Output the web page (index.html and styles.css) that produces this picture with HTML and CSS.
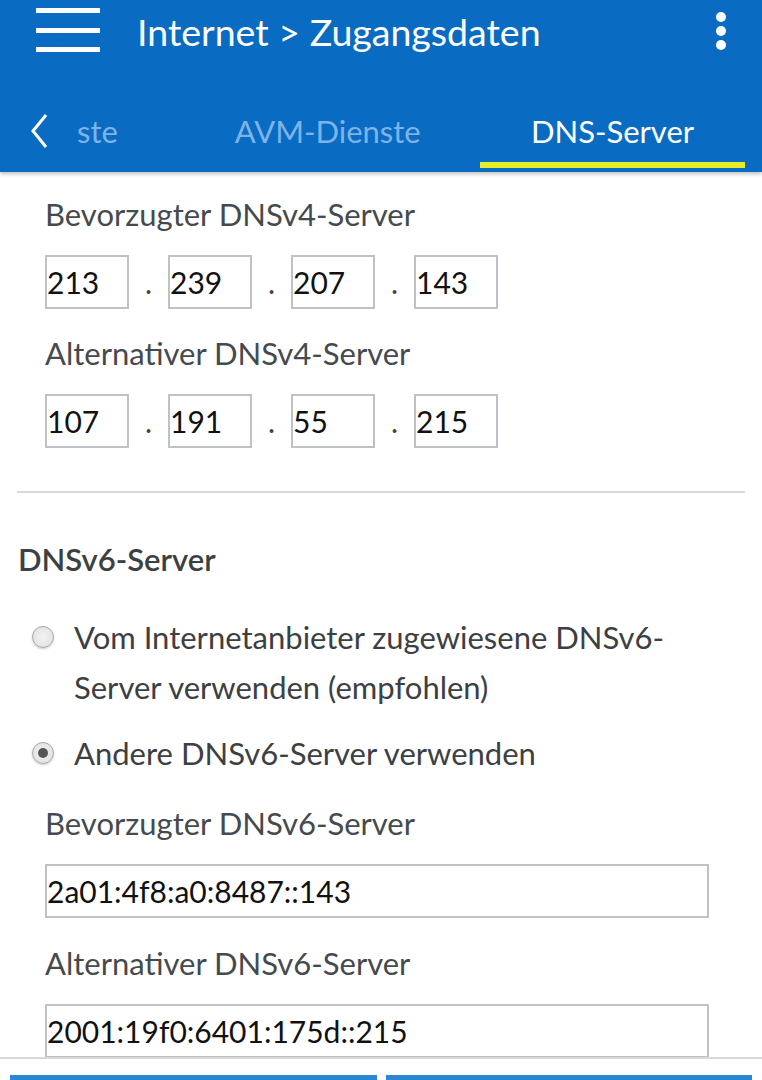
FILE: index.html
```html
<!DOCTYPE html>
<html>
<head>
<meta charset="utf-8">
<link rel="stylesheet" href="styles.css">
</head>
<body>
<header class="appbar">
  <div class="toprow">
    <div class="burger"><span></span><span></span><span></span></div>
    <div class="title">Internet &gt; Zugangsdaten</div>
    <div class="kebab"><span></span><span></span><span></span></div>
  </div>
  <nav class="tabs">
    <svg class="chev" width="20" height="38" viewBox="0 0 20 38"><path d="M17 3 L4 19 L17 35" fill="none" stroke="#fff" stroke-width="3"/></svg>
    <div class="tab t1">ste</div>
    <div class="tab t2">AVM-Dienste</div>
    <div class="tab t3 active">DNS-Server</div>
  </nav>
</header>
<main class="content">
  <div class="label">Bevorzugter DNSv4-Server</div>
  <div class="iprow">
    <div class="box">213</div><div class="dot">.</div>
    <div class="box">239</div><div class="dot">.</div>
    <div class="box">207</div><div class="dot">.</div>
    <div class="box">143</div>
  </div>
  <div class="label">Alternativer DNSv4-Server</div>
  <div class="iprow">
    <div class="box">107</div><div class="dot">.</div>
    <div class="box">191</div><div class="dot">.</div>
    <div class="box">55</div><div class="dot">.</div>
    <div class="box">215</div>
  </div>
  <hr class="divider">
  <h2 class="section">DNSv6-Server</h2>
  <div class="radio first"><span class="rb"></span><span class="rtext">Vom Internetanbieter zugewiesene DNSv6-Server verwenden (empfohlen)</span></div>
  <div class="radio second"><span class="rb checked"></span><span class="rtext">Andere DNSv6-Server verwenden</span></div>
  <div class="label">Bevorzugter DNSv6-Server</div>
  <div class="wide">2a01:4f8:a0:8487::143</div>
  <div class="label">Alternativer DNSv6-Server</div>
  <div class="wide">2001:19f0:6401:175d::215</div>
</main>
<footer class="footer">
  <div class="btn"></div>
  <div class="btn"></div>
</footer>
</body>
</html>
```
FILE: styles.css
```css
* { box-sizing: border-box; }
html, body { margin: 0; padding: 0; }
body {
  width: 762px;
  height: 1080px;
  overflow: hidden;
  background: #fff;
  font-family: "Lato", "Liberation Sans", sans-serif;
  position: relative;
}
.appbar {
  background: #0a6bc2;
  height: 172px;
  box-shadow: 0 2px 4px rgba(0,0,0,0.25);
  position: relative;
  z-index: 2;
}
.toprow {
  height: 68px;
  display: flex;
  align-items: center;
  padding-left: 36px;
}
.burger {
  width: 64px;
  height: 44px;
  display: flex;
  flex-direction: column;
  justify-content: space-between;
  margin-top: -8px;
}
.burger span { display: block; height: 5px; background: #fff; }
.title {
  color: #fff;
  font-size: 37.5px;
  margin-left: 37px;
  margin-top: -6px;
}
.kebab {
  margin-left: auto;
  margin-right: 36px;
  display: flex;
  flex-direction: column;
  gap: 4px;
  margin-top: -6px;
}
.kebab span { width: 10px; height: 10px; border-radius: 50%; background: #fff; display: block; }
.tabs {
  height: 104px;
  display: flex;
  align-items: center;
  padding-top: 22px;
}
.chev { margin-left: 29px; margin-top: 0; }
.tab { font-size: 31px; color: #7db4e8; }
.t1 { margin-left: 28px; }
.t2 { margin-left: 117px; }
.t3 {
  color: #fff;
  margin-left: auto;
  width: 265px;
  margin-right: 17px;
  text-align: center;
  align-self: stretch;
  display: flex;
  align-items: center;
  justify-content: center;
  position: relative;
}
.t3::after {
  content: "";
  position: absolute;
  left: 0; right: 0;
  bottom: 4px;
  height: 6px;
  background: #e9ec2a;
}
.content { padding: 22px 17px 0 17px; }
.label {
  font-size: 31px;
  color: #454a4e;
  padding-left: 28px;
  line-height: 40px;
}
.iprow {
  display: flex;
  align-items: center;
  padding-left: 28px;
  margin-top: 21px;
  margin-bottom: 24px;
}
.box {
  width: 84px;
  height: 54px;
  border: 2px solid #bcc2c6;
  font-size: 30px;
  color: #111;
  line-height: 50px;
  padding-left: 0;
}
.dot {
  width: 39px;
  text-align: center;
  font-size: 30px;
  color: #444;
}
.divider {
  border: 0;
  height: 2px;
  background: #d9d9d9;
  margin: 43px 0 0 0;
}
.section {
  font-size: 31px;
  font-weight: 600;
  color: #3c4043;
  margin: 46px 0 0 1px;
  line-height: 40px;
}
.radio {
  display: flex;
  align-items: flex-start;
  padding-left: 15px;
}
.radio.first { margin-top: 33px; }
.radio.second { margin-top: 16px; margin-bottom: 25px; }
.rb {
  width: 22px;
  height: 22px;
  border-radius: 50%;
  border: 1px solid #a9a9a9;
  background: radial-gradient(circle, #f4f4f4 0%, #dcdcdc 100%);
  flex: 0 0 22px;
  margin-top: 14px;
  position: relative;
  box-shadow: 0 1px 2px rgba(0,0,0,0.2);
}
.rb.checked::after {
  content: "";
  position: absolute;
  left: 5px; top: 5px;
  width: 10px; height: 10px;
  border-radius: 50%;
  background: #555;
}
.rtext {
  font-size: 31px;
  color: #3c4043;
  line-height: 50px;
  margin-left: 20px;
  max-width: 630px;
}
.wide {
  margin-left: 28px;
  width: 664px;
  height: 54px;
  border: 2px solid #bcc2c6;
  font-size: 30px;
  color: #111;
  line-height: 50px;
  padding-left: 0;
  margin-top: 21px;
  margin-bottom: 25px;
}
.footer {
  position: absolute;
  left: 0; right: 0;
  top: 1057px;
  height: 23px;
  border-top: 2px solid #d9d9d9;
  background: #fff;
  display: flex;
  gap: 9px;
  padding: 16px 10px 0 10px;
}
.btn { flex: 1; background: #2b86d6; }
```
